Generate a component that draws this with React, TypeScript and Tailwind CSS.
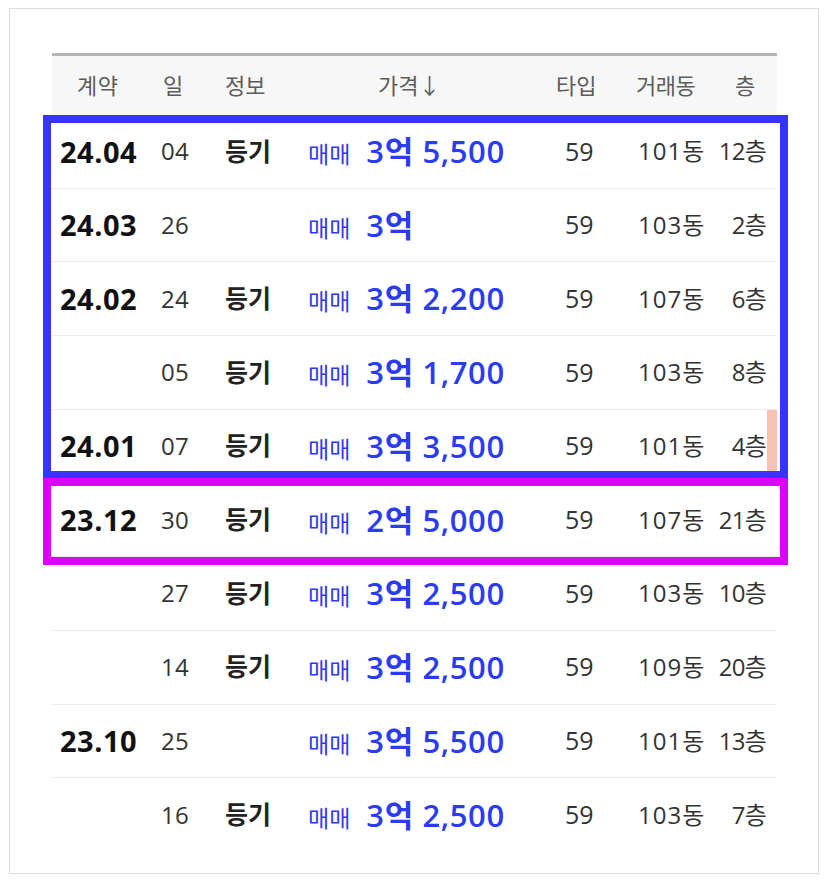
import React from "react";

type Row = {
  ym: string;
  day: string;
  reg: boolean;
  price: string;
  type: string;
  dong: string;
  floor: string;
  mark?: boolean;
};

const rows: Row[] = [
  { ym: "24.04", day: "04", reg: true, price: "3억 5,500", type: "59", dong: "101동", floor: "12층" },
  { ym: "24.03", day: "26", reg: false, price: "3억", type: "59", dong: "103동", floor: "2층" },
  { ym: "24.02", day: "24", reg: true, price: "3억 2,200", type: "59", dong: "107동", floor: "6층" },
  { ym: "", day: "05", reg: true, price: "3억 1,700", type: "59", dong: "103동", floor: "8층" },
  { ym: "24.01", day: "07", reg: true, price: "3억 3,500", type: "59", dong: "101동", floor: "4층", mark: true },
  { ym: "23.12", day: "30", reg: true, price: "2억 5,000", type: "59", dong: "107동", floor: "21층" },
  { ym: "", day: "27", reg: true, price: "3억 2,500", type: "59", dong: "103동", floor: "10층" },
  { ym: "", day: "14", reg: true, price: "3억 2,500", type: "59", dong: "109동", floor: "20층" },
  { ym: "23.10", day: "25", reg: false, price: "3억 5,500", type: "59", dong: "101동", floor: "13층" },
  { ym: "", day: "16", reg: true, price: "3억 2,500", type: "59", dong: "103동", floor: "7층" },
];

const font = { fontFamily: '"Open Sans", "Noto Sans CJK KR", sans-serif' };

export default function App() {
  return (
    <div className="min-h-screen bg-white pl-[9px] pt-[8px]" style={font}>
      <div className="w-[810px] h-[866px] border border-[#dcdcdc] bg-white pl-[42px] pt-[44px]">
        <div className="relative w-[725px]">
          {/* header */}
          <div className="flex items-center h-[62px] border-t-[3px] border-[#b4b4b4] bg-[#f7f7f7] text-[22px] text-[#5c5c5c]">
            <div className="w-[93px] pl-[25px] tracking-[0.5px]">계약</div>
            <div className="w-[60px] pl-[18px]">일</div>
            <div className="w-[85px] pl-[20px]">정보</div>
            <div className="w-[240px] pl-[88px]">가격↓</div>
            <div className="w-[95px] pl-[26px]">타입</div>
            <div className="w-[90px] pl-[11px] tracking-[-0.5px]">거래동</div>
            <div className="w-[62px] pl-[20px]">층</div>
          </div>

          {rows.map((r, i) => (
            <div
              key={i}
              className={`relative flex items-center h-[73.7px] ${i < rows.length - 1 ? "border-b border-[#ececec]" : ""}`}
            >
              <div className="w-[93px] pl-[8px] text-[29px] font-bold text-[#111] tracking-[0.5px]">{r.ym}</div>
              <div className="w-[60px] pl-[16px] text-[24px] text-[#333] tracking-[0.3px]">{r.day}</div>
              <div className="w-[85px] pl-[20px] text-[25px] font-bold text-[#222]">{r.reg ? "등기" : ""}</div>
              <div className="w-[240px] pl-[18px] text-[#2b3cf0] flex items-baseline">
                <span className="text-[23px] mr-[16px]">매매</span>
                <span className="text-[31px] font-semibold tracking-[0.6px]">{r.price}</span>
              </div>
              <div className="w-[95px] pl-[35px] text-[25px] text-[#333]">{r.type}</div>
              <div className="w-[90px] pl-[13px] text-[24px] text-[#333] tracking-[1px]">{r.dong}</div>
              <div className="w-[62px] pr-[11px] text-right text-[24px] text-[#333] tracking-[-0.8px]">{r.floor}</div>
              {r.mark && <div className="absolute right-0 top-0 bottom-0 w-[10px] bg-[#f8c1b2]" />}
            </div>
          ))}

          {/* annotation boxes */}
          <div className="absolute left-[-9px] top-[62px] w-[745px] h-[364px] border-[8px] border-[#3535ff]" />
          <div className="absolute left-[-9px] top-[425px] w-[745px] h-[87px] border-[8px] border-[#dd00fb]" />
        </div>
      </div>
    </div>
  );
}
